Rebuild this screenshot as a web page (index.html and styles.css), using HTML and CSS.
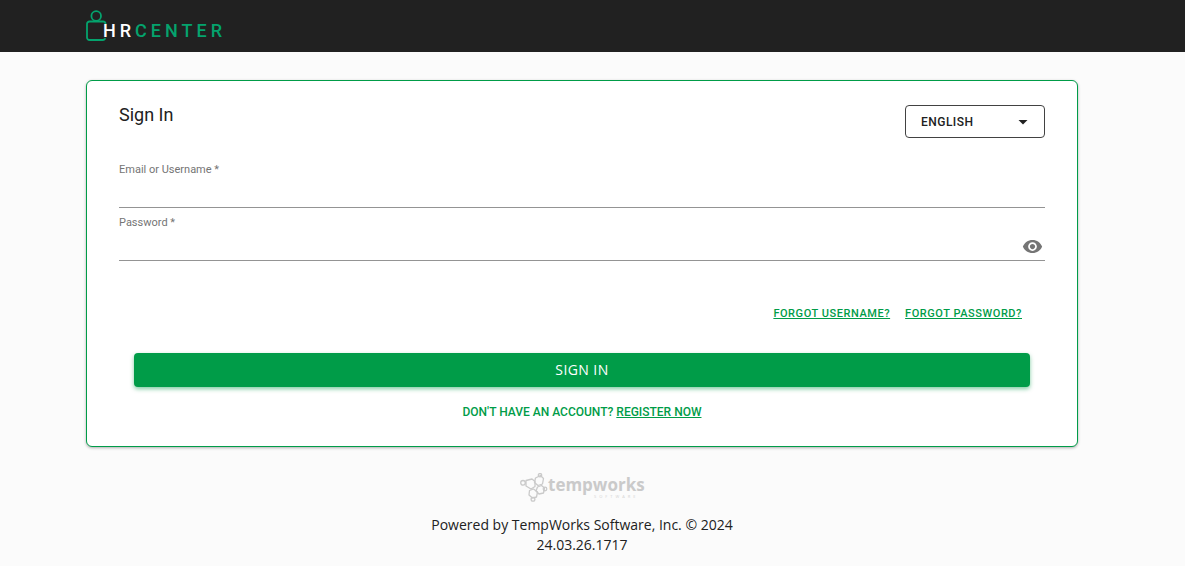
FILE: index.html
```html
<!DOCTYPE html>
<html lang="en">
<head>
    <meta charset="UTF-8">
    <meta name="viewport" content="width=device-width, initial-scale=1.0">
    <title>HRCenter</title>
    <link rel="stylesheet" href="styles.css">
</head>
<body>
    <header class="topbar">
        <a href="#" class="brand" aria-label="HRCenter">
            <svg width="142" height="32" viewBox="0 0 142 32">
                <g fill="none" stroke="#04a36d" stroke-width="1.8" stroke-linecap="round">
                    <circle cx="10.2" cy="6" r="4.800"/>
                    <path d="M19.500 13.500a2.500 2.500 0 0 0-2.500-2h-13.500A2.500 2.500 0 0 0 1 14v13.500a2.500 2.500 0 0 0 2.500 2.500h13.500a2.500 2.500 0 0 0 2-1.200"/>
                </g>
                <text class="brand-text" x="17" y="27"><tspan class="brand-hr">HR</tspan>CENTER</text>
            </svg>
        </a>
    </header>
    <div class="page">
        <main class="card">
            <form>
                <div class="card-head">
                    <h1>Sign In</h1>
                    <div class="language">
                        <select aria-label="Language">
                            <option>ENGLISH</option>
                        </select>
                        <svg class="arrow" width="10" height="5" viewBox="0 0 10 5"><path d="M0.500 0h9L5 4.500z" fill="#212121"/></svg>
                    </div>
                </div>
                <div class="field">
                    <label for="username">Email or Username *</label>
                    <input type="text" id="username">
                </div>
                <div class="field">
                    <label for="password">Password *</label>
                    <div class="field-row">
                        <input type="password" id="password">
                        <button type="button" class="show-password" aria-label="Show password">
                            <svg width="21" height="21" viewBox="0 0 24 24"><path fill="#757575" d="M12 4.500C7 4.500 2.730 7.610 1 12c1.730 4.390 6 7.500 11 7.500s9.270-3.110 11-7.500c-1.730-4.390-6-7.500-11-7.500zM12 17c-2.760 0-5-2.240-5-5s2.240-5 5-5 5 2.240 5 5-2.240 5-5 5zm0-8c-1.660 0-3 1.340-3 3s1.340 3 3 3 3-1.340 3-3-1.340-3-3-3z"/></svg>
                        </button>
                    </div>
                </div>
                <div class="forgot">
                    <a href="#">FORGOT USERNAME?</a>
                    <a href="#">FORGOT PASSWORD?</a>
                </div>
                <div class="actions">
                    <button type="submit" class="submit">SIGN IN</button>
                </div>
                <p class="register">DON'T HAVE AN ACCOUNT? <a href="#">REGISTER NOW</a></p>
            </form>
        </main>
        <footer class="footer">
            <svg width="132" height="30" viewBox="-4 0 132 30" role="img" aria-label="tempworks software">
                <g fill="none" stroke="#cacaca" stroke-width="1.300" stroke-linejoin="round">
                    <path d="M6 7.500l6-1.500 3 2.500v5l-4 2.500-5-3z"/>
                    <circle cx="3" cy="9.800" r="2.300"/>
                    <path d="M15.500 5l5-2.500 3 3-1 5.500-4.500 1.500-3.500-3z"/>
                    <circle cx="20" cy="2.200" r="1.700"/>
                    <path d="M17.500 14l4-1.500 3 2.500-1 5-4.500 1-3-3z"/>
                    <circle cx="25" cy="16" r="1.800"/>
                    <path d="M9.500 17.500l4-1.500 4 3-1 5-4 1-3.500-3z"/>
                    <circle cx="13" cy="26.200" r="1.900"/>
                </g>
                <text class="maker" x="28" y="18">tempworks</text>
                <text class="maker-sub" x="74" y="25">SOFTWARE</text>
            </svg>
            <div>Powered by TempWorks Software, Inc. © 2024</div>
            <div>24.03.26.1717</div>
        </footer>
    </div>
</body>
</html>
```

FILE: styles.css
```css
* {
    box-sizing: border-box;
}
body {
    margin: 0;
    background-color: #fbfbfb;
    color: #212121;
    font-family: Roboto, sans-serif;
}
a {
    color: #009c48;
}
.topbar {
    display: flex;
    align-items: center;
    height: 52px;
    padding: 0 86px;
    background-color: #212121;
}
.brand svg {
    display: block;
}
.brand-text {
    fill: #04a36d;
    font-family: Roboto, sans-serif;
    font-size: 18px;
    font-weight: 500;
    letter-spacing: 4px;
}
.brand-hr {
    fill: #fff;
}
.page {
    padding: 28px 107px 0 86px;
}
.card {
    padding: 24px 32px 26px;
    background-color: #fff;
    border: 1px solid #009c48;
    border-radius: 6px;
    box-shadow: 0 1px 3px rgba(0, 0, 0, 0.3);
}
.card-head {
    display: flex;
    justify-content: space-between;
    align-items: flex-start;
    margin-bottom: 17px;
}
h1 {
    margin: 0;
    font-size: 18px;
    font-weight: 400;
    line-height: 20px;
}
.language {
    position: relative;
}
.language select {
    display: block;
    width: 140px;
    height: 33px;
    padding: 0 15px;
    appearance: none;
    background-color: #fff;
    border: 1px solid #424242;
    border-radius: 4px;
    color: #212121;
    font-family: inherit;
    font-size: 12px;
    font-weight: 500;
    letter-spacing: 0.04em;
}
.arrow {
    position: absolute;
    top: 15px;
    right: 17px;
    pointer-events: none;
}
.field {
    padding-top: 7px;
    border-bottom: 1px solid #949494;
}
.field label {
    display: block;
    color: #757575;
    font-size: 11px;
    line-height: 16px;
}
.field input {
    display: block;
    width: 100%;
    height: 29px;
    padding: 0;
    background: none;
    border: 0;
    outline: 0;
    font-family: inherit;
    font-size: 14px;
}
.field-row {
    display: flex;
    align-items: center;
}
.show-password {
    display: flex;
    padding: 2px 2px 0 0;
    background: none;
    border: 0;
    cursor: pointer;
}
.forgot {
    display: flex;
    justify-content: flex-end;
    gap: 15px;
    margin-top: 45px;
    padding-right: 23px;
    font-size: 11px;
    font-weight: 500;
    line-height: 16px;
    letter-spacing: 0.05em;
}
.actions {
    margin-top: 31px;
    padding: 0 15px;
}
.submit {
    display: block;
    width: 100%;
    height: 34px;
    padding: 0 0 2px;
    background-color: #009c48;
    border: 0;
    border-radius: 4px;
    box-shadow: 0 2px 4px rgba(0, 156, 72, 0.5);
    color: #fff;
    font-family: "Open Sans", sans-serif;
    font-size: 14px;
    letter-spacing: 0.03em;
    cursor: pointer;
}
.register {
    margin: 17px 0 0;
    color: #009c48;
    font-size: 12px;
    font-weight: 500;
    line-height: 16px;
    text-align: center;
}
.footer {
    padding-top: 26px;
    font-family: "Open Sans", sans-serif;
    font-size: 14px;
    line-height: 20px;
    text-align: center;
}
.footer svg {
    display: block;
    margin: 0 auto 12px;
}
.maker {
    fill: #cacaca;
    font-family: "Open Sans", sans-serif;
    font-size: 17px;
    font-weight: 700;
}
.maker-sub {
    fill: #d4d4d4;
    font-family: "Open Sans", sans-serif;
    font-size: 4px;
    letter-spacing: 3px;
}
```
